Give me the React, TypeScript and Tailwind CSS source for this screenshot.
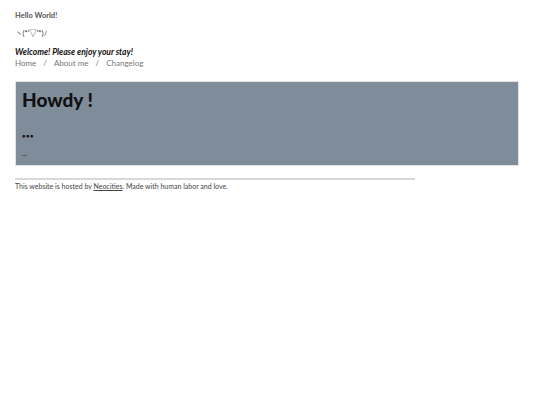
export default function App() {
  return (
    <div
      className="min-h-[405px] bg-white px-[15px] pt-[12px] text-[#444]"
      style={{ fontFamily: "Lato, 'Noto Sans', 'Noto Sans CJK JP', sans-serif" }}
    >
      <header>
        <p className="text-[7.5px] font-bold leading-[8px] text-[#555]">Hello World!</p>
        <p className="mt-[10px] text-[7.5px] leading-[8px] text-[#333]">ヽ(*'▽'*)ﾉ</p>
        <p className="mt-[10px] text-[8.5px] font-bold italic leading-[9px] text-[#111]">
          Welcome! Please enjoy your stay!
        </p>
        <nav className="mt-[2px] flex gap-[7px] text-[8px] leading-[9px] text-[#777]">
          <a>Home</a>
          <span>/</span>
          <a>About me</a>
          <span>/</span>
          <a>Changelog</a>
        </nav>
      </header>

      <main className="mt-[13px] h-[85px] w-[504px] border border-[#e2e2e2] bg-[#7f8c9a] px-[6px] pt-[6px] text-[#111]">
        <h1 className="text-[19px] font-black leading-[24px]">Howdy !</h1>
        <p className="mt-[20px] text-[6px] font-bold leading-[8px] tracking-[0.5px]">•••</p>
        <p className="mt-[9px] text-[7px] leading-[8px]">...</p>
      </main>

      <hr className="mt-[12px] w-[400px] border-t-2 border-[#d8d8d8]" />
      <footer className="mt-[2px] text-[7px] leading-[8px] text-[#444]">
        This website is hosted by <a className="underline">Neocities</a>. Made with human labor and love.
      </footer>
    </div>
  );
}
